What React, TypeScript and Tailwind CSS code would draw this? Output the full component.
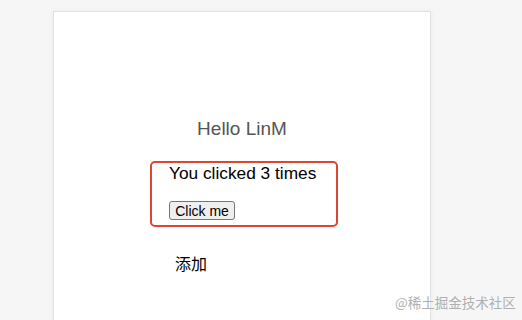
export default function App() {
  return (
    <div className="relative h-[320px] w-[522px] overflow-hidden bg-[#f6f6f6] pl-[53px] pt-[11px] font-['Liberation_Sans','Noto_Sans_CJK_SC',sans-serif]">
      <div className="h-[320px] w-[378px] border-x border-t border-[#e2e2e2] bg-white shadow-[0_0_6px_rgba(0,0,0,0.05)]">
        <p className="mt-[105px] text-center text-[19px] leading-[24px] text-[#555]">Hello LinM</p>
        <div className="ml-[96px] mt-[20px] h-[66px] w-[188px] rounded-[5px] border-[2.5px] border-[#e0452f] pl-[17px]">
          <p className="text-[17.3px] leading-[20px] text-black">You clicked 3 times</p>
          <button className="mt-[18px] flex h-[19px] w-[66px] items-center justify-center rounded-[3px] border border-[#767676] bg-[#efefef] text-[14px] leading-none text-black">
            Click me
          </button>
        </div>
        <p className="ml-[121px] mt-[25px] font-['Noto_Sans_CJK_SC',sans-serif] text-[16px] leading-[22px] text-black">添加</p>
      </div>
      <span className="absolute left-[395px] top-[294px] font-['Noto_Sans_CJK_SC',sans-serif] text-[13.5px] leading-[16px] text-[#b0b0b0]">@稀土掘金技术社区</span>
    </div>
  );
}
